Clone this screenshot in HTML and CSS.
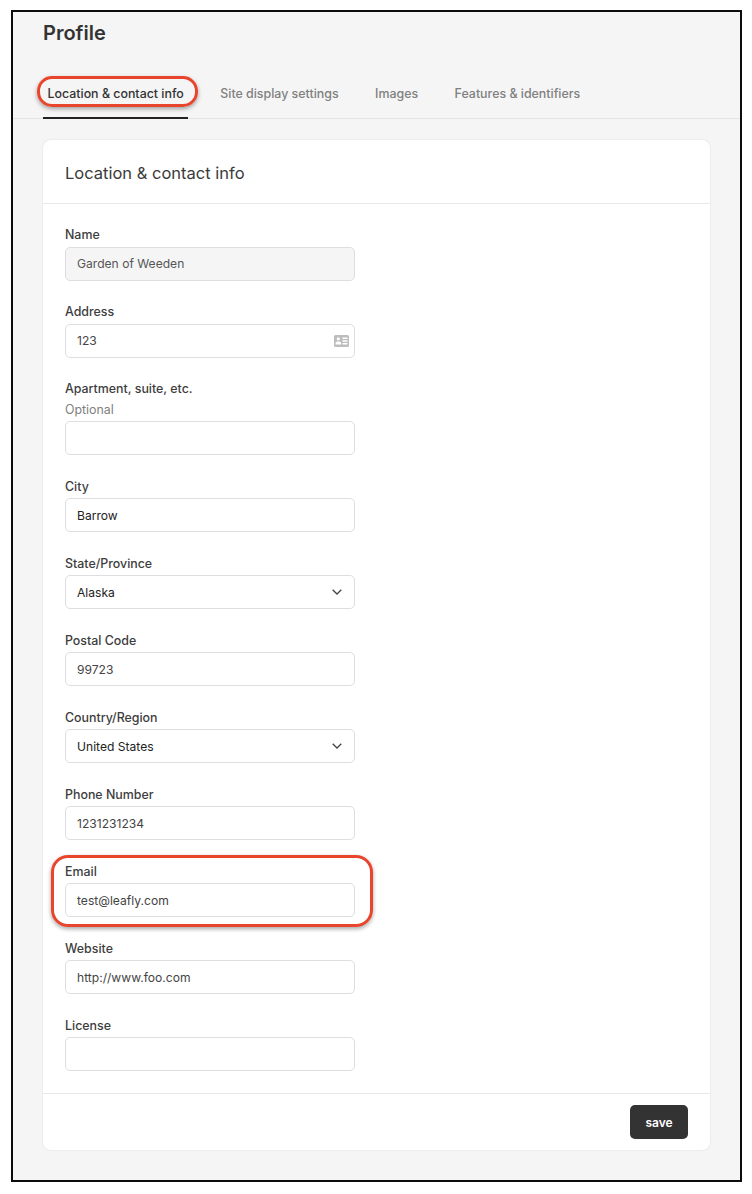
FILE: index.html
```html
<!DOCTYPE html>
<html lang="en">
<head>
<meta charset="utf-8">
<title>Profile</title>
<link rel="stylesheet" href="styles.css">
</head>
<body>
<main class="frame">
  <h1 class="title">Profile</h1>
  <nav class="tabs">
    <a class="tab tab-active">Location &amp; contact info</a>
    <a class="tab">Site display settings</a>
    <a class="tab">Images</a>
    <a class="tab">Features &amp; identifiers</a>
  </nav>
  <section class="card">
    <h2 class="card-title">Location &amp; contact info</h2>
    <div class="form">
      <div class="field"><div class="label">Name</div><div class="input input-disabled">Garden of Weeden</div></div>
      <div class="field"><div class="label">Address</div><div class="input input-soft">123
        <svg class="card-icon" width="15" height="12" viewBox="0 0 15 12"><path fill="#bdbdbd" fill-rule="evenodd" d="M1.500 0h12A1.500 1.500 0 0 1 15 1.500v9a1.500 1.500 0 0 1-1.500 1.500h-12A1.500 1.500 0 0 1 0 10.500v-9A1.500 1.500 0 0 1 1.500 0zM8.500 2.500v1.400h5V2.500zm0 2.800v1.400h5V5.300zm0 2.800v1.400h5V8.100zM4.300 2.200a1.600 1.600 0 1 0 0 3.200 1.600 1.600 0 0 0 0-3.200zM1.500 9.500h5.600V8.200c0-1.100-1-1.700-2.800-1.700s-2.800.6-2.800 1.700z"/></svg>
      </div></div>
      <div class="field field-optional"><div class="label">Apartment, suite, etc.</div><div class="hint">Optional</div><div class="input"></div></div>
      <div class="field"><div class="label">City</div><div class="input">Barrow</div></div>
      <div class="field"><div class="label">State/Province</div><div class="input">Alaska
        <svg class="chevron" width="10" height="6" viewBox="0 0 10 6"><path fill="none" stroke="#444" stroke-width="1.3" d="M.7.8 5 5 9.300.8"/></svg>
      </div></div>
      <div class="field"><div class="label">Postal Code</div><div class="input input-soft">99723</div></div>
      <div class="field"><div class="label">Country/Region</div><div class="input">United States
        <svg class="chevron" width="10" height="6" viewBox="0 0 10 6"><path fill="none" stroke="#444" stroke-width="1.3" d="M.7.8 5 5 9.300.8"/></svg>
      </div></div>
      <div class="field"><div class="label">Phone Number</div><div class="input input-soft">1231231234</div></div>
      <div class="field"><div class="label">Email</div><div class="input input-soft">test@leafly.com</div></div>
      <div class="field"><div class="label">Website</div><div class="input input-soft">http://www.foo.com</div></div>
      <div class="field"><div class="label">License</div><div class="input"></div></div>
    </div>
    <div class="card-footer"><button class="save">save</button></div>
  </section>
  <div class="callout callout-tab"></div>
  <div class="callout callout-email"></div>
</main>
</body>
</html>
```
FILE: styles.css
```css
* { box-sizing: border-box; }
html, body { margin: 0; padding: 0; background: #fff; }
body { font-family: Inter, "Liberation Sans", sans-serif; color: #333; }

.frame {
  position: relative;
  width: 731px;
  height: 1172px;
  margin: 10px 0 0 11px;
  border: 2px solid #0c0c0c;
  background: #f5f5f5;
  overflow: hidden;
}
.title {
  margin: 0;
  padding: 9px 0 0 30px;
  height: 53px;
  font-size: 20px;
  line-height: 25px;
  font-weight: 600;
  color: #333;
}
.tabs {
  display: flex;
  gap: 27.5px;
  height: 54px;
  padding-left: 30px;
  border-bottom: 1px solid #e4e4e4;
}
.tab {
  height: 54px;
  padding: 20px 4.5px 0;
  font-size: 12.4px;
  line-height: 17px;
  font-weight: 500;
  color: #808080;
}
.tab-active {
  color: #333;
  border-bottom: 2px solid #222;
}
.card {
  width: 667px;
  height: 1010px;
  margin: 21px 0 0 30px;
  background: #fff;
  border-radius: 8px;
  box-shadow: 0 0 2px rgba(0,0,0,.12);
  display: flex;
  flex-direction: column;
}
.card-title {
  margin: 0;
  height: 64px;
  padding: 23px 22px 0;
  font-size: 16.5px;
  line-height: 21px;
  font-weight: 400;
  color: #3a3a3a;
  border-bottom: 1px solid #e8e8e8;
}
.form {
  flex: 1;
  padding: 23px 22px 0;
  display: flex;
  flex-direction: column;
  gap: 23px;
}
.label {
  height: 16px;
  margin-bottom: 4px;
  font-size: 12.4px;
  line-height: 16px;
  font-weight: 500;
  color: #3d3d3d;
}
.hint {
  height: 16px;
  margin: 5px 0 3px;
  font-size: 12.4px;
  line-height: 16px;
  color: #808080;
}
.input {
  position: relative;
  width: 290px;
  height: 34px;
  padding: 0 11px;
  border: 1px solid #dedee2;
  border-radius: 5px;
  background: #fff;
  font-size: 12.1px;
  line-height: 32px;
  color: #222;
}
.input-soft { color: #444; }
.input-disabled { background: #f5f5f5; color: #555; }
.field-optional ~ .field .label { line-height: 18px; }
.field-optional ~ .field .input { line-height: 34px; }
.card-icon {
  position: absolute;
  right: 5px;
  top: 10px;
}
.chevron {
  position: absolute;
  right: 12px;
  top: 13px;
}
.card-footer {
  height: 57px;
  padding: 11px 22px 0 0;
  display: flex;
  justify-content: flex-end;
  border-top: 1px solid #e8e8e8;
}
.save {
  width: 58px;
  height: 34px;
  border: 0;
  border-radius: 5px;
  background: #333;
  color: #fff;
  font-family: inherit;
  font-size: 12px;
  font-weight: 600;
}
.callout {
  position: absolute;
  border: 3px solid #e8452c;
  background: transparent;
  box-shadow: 0 2px 4px rgba(0,0,0,.35);
  pointer-events: none;
}
.callout-tab {
  left: 24px;
  top: 64px;
  width: 161px;
  height: 31px;
  border-radius: 15px;
}
.callout-email {
  left: 38px;
  top: 843px;
  width: 322px;
  height: 72px;
  border-radius: 17px;
}
```
